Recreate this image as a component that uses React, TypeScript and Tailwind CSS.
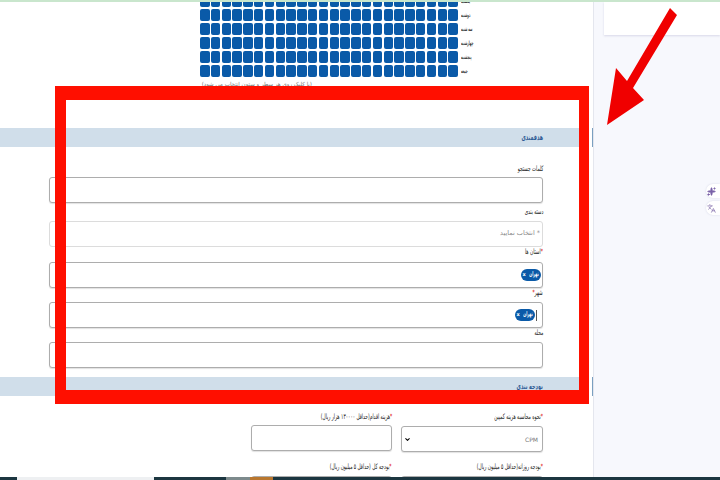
import { ChevronDown, Languages, Sparkles } from "lucide-react";

const days = ["یکشنبه", "دوشنبه", "سه شنبه", "چهارشنبه", "پنجشنبه", "جمعه"];
const hours = Array.from({ length: 24 }, (_, i) => i);

const Label = ({ text, star, starEnd }: { text: string; star?: boolean; starEnd?: boolean }) => (
	<div className="h-[10px] text-[7.5px] leading-[10px] text-[#222]">
		<span className="inline-block origin-right scale-x-[0.58] whitespace-nowrap">
			{star && !starEnd && <span className="text-[#e01010]">*</span>}
			{text}
			{star && starEnd && <span className="text-[#e01010]">*</span>}
		</span>
	</div>
);

const Box = ({ className, children }: { className?: string; children?: React.ReactNode }) => (
	<div className={`h-[26px] rounded-[3px] border border-[#adadad] bg-white flex items-center shadow-[0_1px_1px_rgba(0,0,0,0.12)] ${className ?? ""}`}>
		{children}
	</div>
);

const SectionBar = ({ title }: { title: string }) => (
	<div className="flex h-[19px] justify-between -mr-px" dir="ltr">
		<div className="w-[579px] bg-[#d0deea] flex items-center justify-end pr-[36px]">
			<span dir="rtl" className="inline-block origin-right scale-x-[0.6] text-[8px] font-bold text-[#2f5b95]">{title}</span>
		</div>
		<div className="w-[2px] bg-[#7a9fc0]" />
	</div>
);

const Chip = () => (
	<span className="flex h-[12px] w-[20px] shrink-0 items-center justify-center gap-[2px] rounded-[6px] bg-[#0a5aa8] text-[6.5px] font-bold text-white">
		<span className="-mx-[6px] inline-block w-[24px] scale-x-[0.5] whitespace-nowrap text-center">تهران</span>
		<span className="text-[5px]">x</span>
	</span>
);

export default function App() {
	return (
		<div className="relative flex h-[480px] w-[720px] flex-col overflow-hidden bg-white font-['DejaVu_Sans',sans-serif]">
			<div className="relative z-10 h-[2px] shrink-0 bg-[#c9e6cd]" />

			<div className="flex min-h-0 flex-1">
				<main className="w-[594px] shrink-0 overflow-hidden border-r border-[#e4e6ee] bg-white">
					{/* جدول ساعت ها */}
					<div className="flex h-[126px] flex-col pl-[200px]">
						<div className="-mt-[7.5px] flex">
							<div className="grid grid-cols-[repeat(24,9.5px)] gap-x-[1.3px] gap-y-[2.2px]">
								{days.map(day =>
									hours.map(h => <div key={day + h} className="h-[12px] rounded-[2px] bg-[#0a5aa8]" />)
								)}
							</div>
							<div className="ml-[3px] flex flex-col gap-y-[2.2px]">
								{days.map(day => (
									<div key={day} className="h-[12px] text-[6px] font-bold leading-[12px] text-[#333]">
										<span className="inline-block origin-left scale-x-[0.44] whitespace-nowrap" dir="rtl">{day}</span>
									</div>
								))}
							</div>
						</div>
						<div className="mt-[3px] w-[112px] whitespace-nowrap text-[5.5px] leading-[8px] text-[#777]" dir="rtl">
							(با کلیک روی هر سطر و ستون انتخاب می شود)
						</div>
					</div>

					<SectionBar title="هدفمندی" />
					<div className="pl-[49px] pr-[50px] pt-[17px]" dir="rtl">
						<Label text="کلمات جستجو" />
						<Box className="mt-[3px]" />
						<div className="mt-[4px]"><Label text="دسته بندی" /></div>
						<Box className="mt-[4px] border-[#dcdcdc] shadow-none pr-[2px] text-[6.5px] text-[#888]">* انتخاب نمایید</Box>
						<Label text="استان ها" star />
						<Box className="mt-[5px] pr-px"><Chip /></Box>
						<Label text="شهر" star starEnd />
						<Box className="mt-[4px] pr-[5px]">
							<span className="ml-px h-[11px] w-px bg-[#555]" />
							<Chip />
						</Box>
						<Label text="محله" />
						<Box className="mt-[4px]" />
					</div>

					<div className="mt-[9px]"><SectionBar title="بودجه بندی" /></div>
					<div className="grid grid-cols-[142px_141px] gap-x-[9px] pr-[50px] pt-[16px]" dir="rtl">
						<div>
							<Label text="نحوه محاسبه هزینه کمپین" star />
							<Box className="mt-[4px] justify-between px-[2px] text-[6px] text-[#777]">
								<span className="pr-[2px]">CPM</span>
								<ChevronDown size={7} strokeWidth={3.5} className="text-black" />
							</Box>
						</div>
						<div>
							<Label text="هزینه اقدام(حداقل ۱۳۰۰۰۰ هزار ریال)" star />
							<Box className="mt-[3px]" />
						</div>
						<div className="mt-[10px]">
							<Label text="بودجه روزانه(حداقل ۵ میلیون ریال)" star />
							<Box className="mt-[4px]" />
						</div>
						<div className="mt-[10px]">
							<Label text="بودجه کل (حداقل ۵ میلیون ریال)" star />
							<Box className="mt-[4px]" />
						</div>
					</div>
				</main>

				<aside className="flex min-w-0 flex-1 flex-col bg-[#f7f8fd] pl-[10px]">
					<div className="h-[33px] bg-white shadow-[0_1px_2px_rgba(80,80,140,0.18)]" />
					<div className="mt-[149px] flex flex-col items-end gap-[3px]">
						<span className="flex h-[14px] w-[14px] items-center rounded-l-full bg-white pl-px shadow-[0_0_2px_rgba(80,80,140,0.2)]">
							<Sparkles size={9} className="fill-[#7a62a8] text-[#7a62a8]" />
						</span>
						<span className="flex h-[14px] w-[14px] items-center rounded-l-full bg-white pl-px shadow-[0_0_2px_rgba(80,80,140,0.2)]">
							<Languages size={9} className="text-[#8a76b0]" />
						</span>
					</div>
				</aside>
			</div>

			{/* نوار پایین */}
			<div className="flex h-[3px] shrink-0 bg-[#1c3640]">
				<div className="w-[17px]" />
				<div className="w-[137px] bg-[#eef0f2]" />
				<div className="w-[72px]" />
				<div className="w-[24px] bg-[#7d8a8c]" />
				<div className="w-[23px] bg-[#b9772f]" />
			</div>

			{/* highlight over the screenshot */}
			<div className="pointer-events-none absolute left-[55px] top-[86px] h-[318px] w-[534px] border-y-[14px] border-l-[11px] border-r-[10px] border-[#ff0f00]" />
			<svg className="pointer-events-none absolute left-[600px] top-0" width="84" height="130" viewBox="600 0 84 130">
				<polygon points="670,8 677,15 633,88 644,100 607,125 616,68 627,81" fill="#f00000" />
			</svg>
		</div>
	);
}
